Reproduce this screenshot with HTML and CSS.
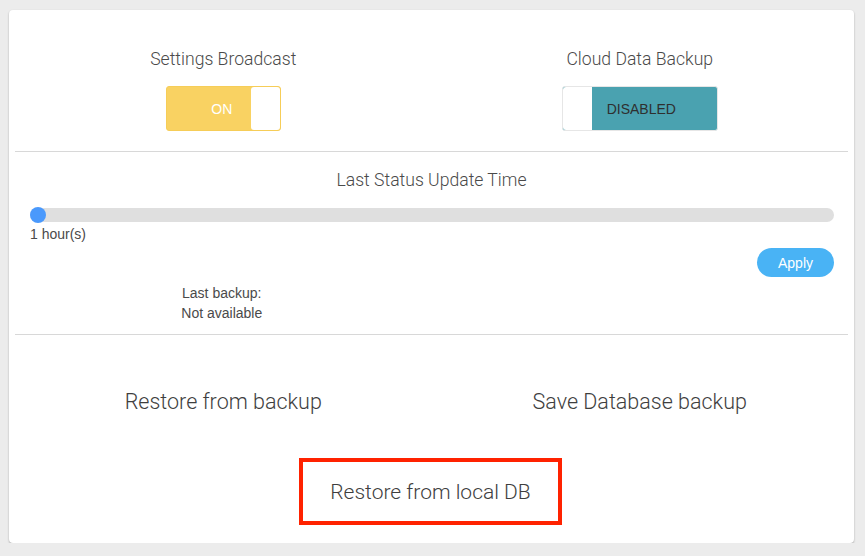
FILE: index.html
```html
<!DOCTYPE html>
<html>
<head>
<meta charset="utf-8">
<link rel="stylesheet" href="styles.css">
</head>
<body>
<div class="card">
  <section class="toggles">
    <div class="half">
      <div class="title">Settings Broadcast</div>
      <div class="switch switch-on">
        <span class="switch-label">ON</span>
        <span class="knob"></span>
      </div>
    </div>
    <div class="half">
      <div class="title">Cloud Data Backup</div>
      <div class="switch switch-off">
        <span class="knob"></span>
        <span class="switch-label">DISABLED</span>
      </div>
    </div>
  </section>
  <section class="status">
    <div class="title">Last Status Update Time</div>
    <div class="slider">
      <div class="track"><span class="thumb"></span></div>
      <div class="value">1 hour(s)</div>
      <div class="apply-row"><button class="apply">Apply</button></div>
    </div>
    <div class="backup-row">
      <div class="backup-info">Last backup:<br>Not available</div>
    </div>
  </section>
  <section class="actions">
    <div class="action-row">
      <div class="action">Restore from backup</div>
      <div class="action">Save Database backup</div>
    </div>
    <div class="local-box">Restore from local DB</div>
  </section>
</div>
</body>
</html>
```

FILE: styles.css
```css
html, body {
  margin: 0;
  padding: 0;
  background: #ececec;
}
body {
  padding: 10px 11px 0 9px;
  font-family: "Liberation Sans", Arial, sans-serif;
}
.card {
  background: #fff;
  border-radius: 4px;
  box-shadow: 0 1px 2px rgba(0,0,0,0.3);
  padding: 0 6px;
  height: 533px;
  box-sizing: border-box;
}
.title {
  font-family: Roboto, "Liberation Sans", sans-serif;
  font-weight: 300;
  font-size: 17.6px;
  line-height: 20px;
  color: #4a4a4a;
  text-align: center;
}
.toggles {
  display: flex;
  padding: 39px 0 20px;
  border-bottom: 1px solid #d8d8d8;
}
.half {
  flex: 1;
  display: flex;
  flex-direction: column;
  align-items: center;
}
.toggles .title {
  margin-bottom: 17px;
}
.switch {
  display: flex;
  height: 45px;
  box-sizing: border-box;
  border-radius: 3px;
  font-size: 14px;
}
.switch-on {
  width: 115px;
  background: #f9d262;
  border: 1px solid #f6cd58;
  color: #fff;
}
.switch-off {
  width: 156px;
  background: #4aa2b0;
  border: 1px solid #e6e6e6;
  color: #2f2f2f;
}
.switch-label {
  flex: 1;
  display: flex;
  align-items: center;
  justify-content: center;
}
.switch-on .switch-label {
  padding-left: 26px;
}
.switch-off .switch-label {
  padding-right: 26px;
}
.knob {
  width: 29px;
  background: #fff;
  border-radius: 3px;
}
.switch-off .knob {
  border-radius: 3px 0 0 3px;
}
.status {
  padding: 18px 0 11px;
  border-bottom: 1px solid #d8d8d8;
}
.slider {
  padding: 0 14px 0 15px;
  margin-top: 18px;
}
.track {
  position: relative;
  height: 14px;
  background: #dfdfdf;
  border-radius: 7px;
}
.thumb {
  position: absolute;
  left: 0;
  top: -1px;
  width: 16px;
  height: 16px;
  border-radius: 50%;
  background: #4a99fc;
}
.value {
  margin-top: 4px;
  font-size: 14px;
  line-height: 16px;
  color: #4a4a4a;
}
.apply-row {
  display: flex;
  justify-content: flex-end;
  margin-top: 6px;
}
.apply {
  width: 77px;
  height: 29px;
  border: none;
  border-radius: 15px;
  background: #49b3f5;
  color: #fff;
  font-family: "Liberation Sans", Arial, sans-serif;
  font-size: 14px;
  padding: 0;
}
.backup-row {
  display: flex;
  margin-top: 6px;
}
.backup-info {
  width: 50%;
  text-align: center;
  font-size: 14px;
  line-height: 20px;
  color: #4a4a4a;
  padding-right: 3px;
  box-sizing: border-box;
}
.actions {
  padding-top: 55px;
}
.action-row {
  display: flex;
}
.action {
  flex: 1;
  text-align: center;
  font-family: Roboto, "Liberation Sans", sans-serif;
  font-weight: 300;
  font-size: 21.5px;
  line-height: 24px;
  color: #3e3e3e;
}
.local-box {
  width: 263px;
  height: 67px;
  box-sizing: border-box;
  margin: 44px auto 0;
  border: 4px solid #ff2200;
  display: flex;
  align-items: center;
  justify-content: center;
  font-family: Roboto, "Liberation Sans", sans-serif;
  font-weight: 300;
  font-size: 21px;
  color: #3e3e3e;
  position: relative;
  left: -1px;
}
```
